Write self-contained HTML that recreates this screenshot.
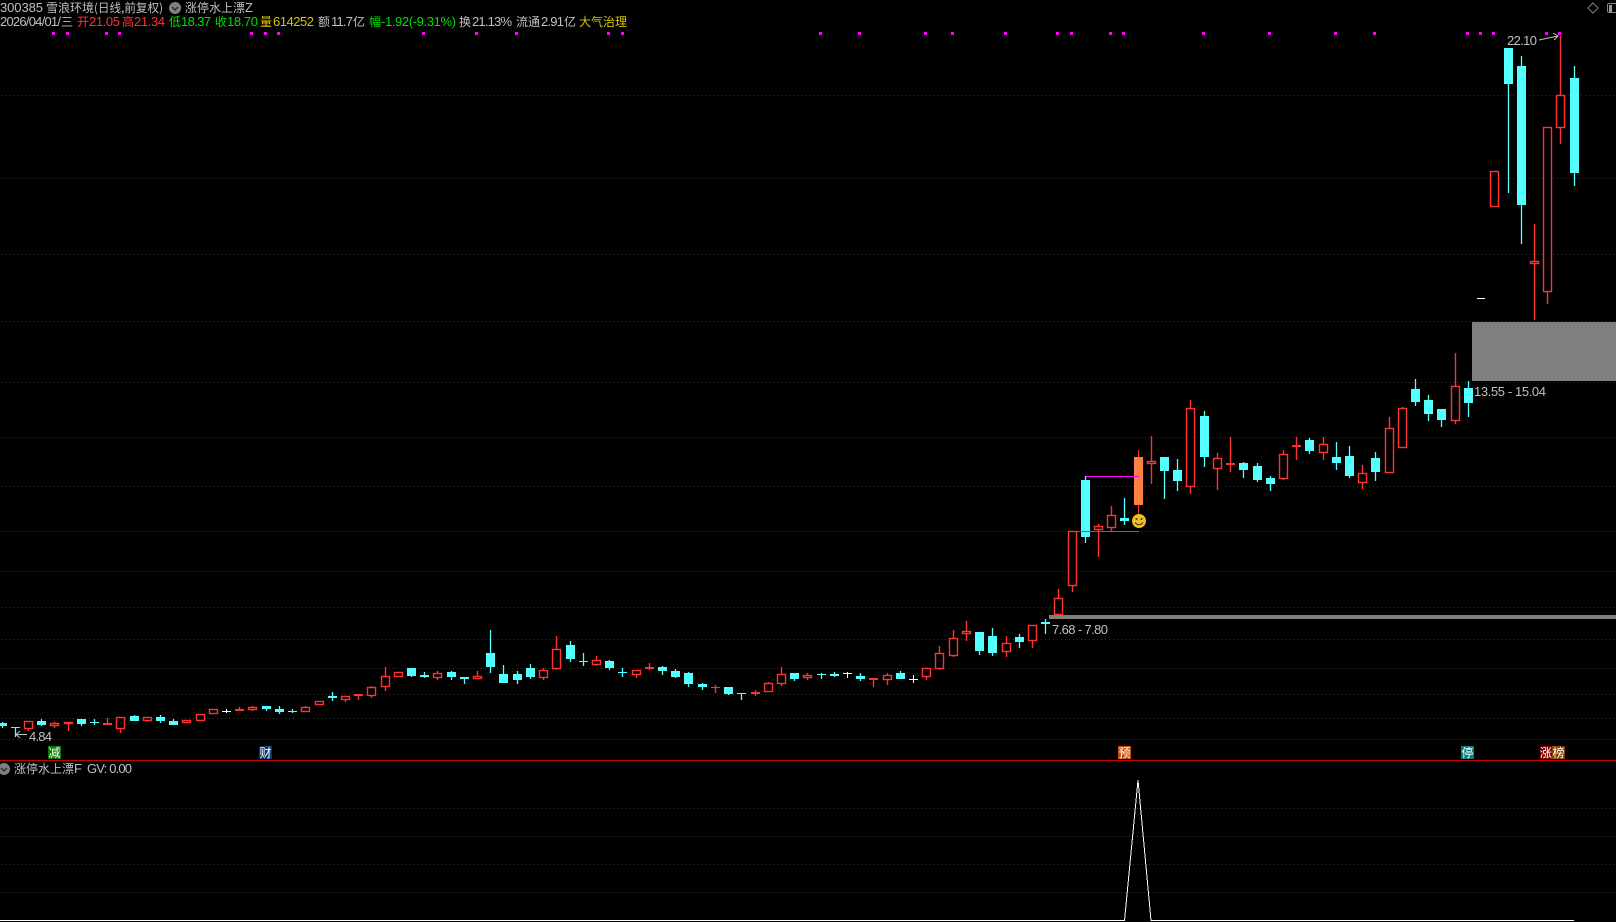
<!DOCTYPE html>
<html><head><meta charset="utf-8"><style>
html,body{margin:0;padding:0;background:#000;width:1616px;height:922px;overflow:hidden}
svg{display:block}
text{font-family:"Liberation Sans","WenQuanYi Zen Hei","Noto Sans CJK SC",sans-serif;font-size:13px;fill:#c0c0c0}
.c{font-size:12px;font-family:"WenQuanYi Zen Hei","Noto Sans CJK SC",sans-serif}
.r{fill:#ff3232}.g{fill:#00e000}.y{fill:#d8c400}.w{fill:#fff;text-anchor:middle}
</style></head><body>
<svg width="1616" height="922" viewBox="0 0 1616 922" xmlns="http://www.w3.org/2000/svg">
<rect width="1616" height="922" fill="#000"/>
<g shape-rendering="crispEdges">
<path fill="#808080" d="M1472 322H1616V381H1472zM1049 615H1616V619H1049z"/>
<path stroke="#a80000" stroke-dasharray="1 3" fill="none" d="M1 95.5H1616M1 178.5H1616M1 254.5H1616M1 321.5H1616M1 382.5H1616M1 437.5H1616M1 486.5H1616M1 531.5H1616M1 571.5H1616M1 607.5H1616M1 639.5H1616M1 668.5H1616M1 694.5H1616M1 718.5H1616M1 739.5H1616M1 808.5H1616M1 836.5H1616M1 864.5H1616M1 892.5H1616"/>
<path stroke="#c80000" d="M0 760.5H1616"/>
<path fill="#ff00ff" d="M52 32h3v3h-3zM66 32h3v3h-3zM105 32h3v3h-3zM118 32h3v3h-3zM250 32h3v3h-3zM264 32h3v3h-3zM277 32h3v3h-3zM422 32h3v3h-3zM475 32h3v3h-3zM515 32h3v3h-3zM607 32h3v3h-3zM621 32h3v3h-3zM819 32h3v3h-3zM858 32h3v3h-3zM924 32h3v3h-3zM951 32h3v3h-3zM1004 32h3v3h-3zM1056 32h3v3h-3zM1070 32h3v3h-3zM1109 32h3v3h-3zM1122 32h3v3h-3zM1202 32h3v3h-3zM1268 32h3v3h-3zM1334 32h3v3h-3zM1373 32h3v3h-3zM1466 32h3v3h-3zM1479 32h3v3h-3zM1492 32h3v3h-3zM1545 32h3v3h-3zM1558 32h3v3h-3z"/>
<!-- cyan wicks -->
<path shape-rendering="auto" stroke-width="1.3" stroke="#54ffff" fill="none" d="M2.5 722V728M15.5 727V737M41.5 719V726M81.5 719V726M94.5 719V725M134.5 715V721M160.5 715V723M173.5 719V725M266.5 706V711M279.5 706V714M292.5 709V713M332.5 692V701M411.5 668V677M424.5 672V678M451.5 671V680M464.5 677V684M490.5 630V673M503.5 665V683M517.5 671V684M530.5 664V679M570.5 641V662M583.5 653V666M609.5 660V670M622.5 668V677M662.5 666V675M675.5 669V678M688.5 672V687M702.5 683V690M728.5 687V695M741.5 693V700M794.5 673V681M821.5 673V679M834.5 672V677M860.5 673V681M900.5 671V679M979.5 632V655M992.5 628V656M1019.5 634V648M1045.5 619V634M1085.5 476V543M1124.5 498V525M1164.5 457V499M1177.5 459V491M1204.5 411V467M1243.5 462V478M1257.5 463V482M1270.5 476V491M1309.5 438V454M1336.5 442V470M1349.5 446V478M1375.5 452V481M1415.5 379V406M1428.5 395V421M1441.5 409V427M1468.5 381V417M1508.5 48V193M1521.5 56V244M1574.5 66V186"/>
<!-- cyan bodies -->
<path fill="#54ffff" d="M-2 723h9V726h-9zM11 727h9v1h-9zM37 721h9V725h-9zM77 719h9V724h-9zM90 722h9v1h-9zM130 716h9V721h-9zM156 717h9V721h-9zM169 721h9V725h-9zM262 706h9V709h-9zM275 709h9V712h-9zM288 711h9v1h-9zM328 696h9V698h-9zM407 668h9V676h-9zM420 675h9V677h-9zM447 672h9V677h-9zM460 677h9V679h-9zM486 653h9V667h-9zM499 674h9V683h-9zM513 674h9V680h-9zM526 668h9V677h-9zM566 645h9V659h-9zM579 661h9v1h-9zM605 661h9V668h-9zM618 672h9v1h-9zM658 667h9V671h-9zM671 671h9V677h-9zM684 673h9V684h-9zM698 684h9V687h-9zM724 687h9V694h-9zM737 693h9v1h-9zM790 673h9V679h-9zM817 674h9v1h-9zM830 674h9V676h-9zM856 676h9V679h-9zM896 673h9V679h-9zM975 632h9V651h-9zM988 636h9V653h-9zM1015 637h9V642h-9zM1041 622h9V624h-9zM1081 480h9V537h-9zM1120 518h9V521h-9zM1160 457h9V471h-9zM1173 470h9V481h-9zM1200 416h9V457h-9zM1239 463h9V470h-9zM1253 466h9V480h-9zM1266 478h9V484h-9zM1305 440h9V451h-9zM1332 457h9V463h-9zM1345 456h9V476h-9zM1371 458h9V472h-9zM1411 389h9V402h-9zM1424 400h9V414h-9zM1437 409h9V420h-9zM1464 388h9V403h-9zM1504 48h9V84h-9zM1517 66h9V205h-9zM1570 78h9V173h-9z"/>
<!-- red wicks -->
<path shape-rendering="auto" stroke-width="1.4" stroke="#ff3232" fill="none" d="M28.5 721V731M54.5 722V728M68.5 722V731M107.5 718V725M120.5 717V733M147.5 717V722M239.5 707V710M252.5 706V711M305.5 706V712M345.5 696V702M358.5 694V700M371.5 686V698M385.5 667V691M437.5 671V680M477.5 671V679M543.5 668V680M556.5 636V670M596.5 656V666M636.5 670V678M649.5 663V670M715.5 685V693M755.5 690V696M768.5 682V692M781.5 667V686M807.5 673V680M873.5 678V687M887.5 673V685M926.5 668V680M939.5 646V670M953.5 630V657M966.5 621V641M1006.5 636V657M1032.5 625V648M1058.5 589V615M1072.5 531V592M1098.5 524V557M1111.5 506V531M1151.5 436V484M1190.5 400V494M1217.5 453V490M1230.5 437V472M1283.5 450V480M1296.5 437V460M1323.5 437V460M1362.5 465V489M1389.5 417V473M1402.5 407V448M1455.5 353V424M1534.5 224V320M1547.5 127V304M1560.5 36V144"/>
<!-- red flats -->
<path fill="#ff3232" d="M103 723h9V725h-9zM235 709h9V711h-9zM354 694h9V696h-9zM645 667h9V669h-9zM711 687h9v1h-9zM751 692h9V694h-9zM869 678h9V680h-9zM1226 463h9V465h-9zM1292 445h9V447h-9z"/>
<!-- red hollow -->
<g fill="#000" stroke="#ff3232" stroke-width="1.4" shape-rendering="auto">
<rect x="24.5" y="721.5" width="8" height="7"/><rect x="50.5" y="723.5" width="8" height="2"/><rect x="64.5" y="722.5" width="8" height="1"/><rect x="116.5" y="717.5" width="8" height="11"/><rect x="143.5" y="717.5" width="8" height="3"/><rect x="182.5" y="720.5" width="8" height="2"/><rect x="196.5" y="714.5" width="8" height="6"/><rect x="209.5" y="709.5" width="8" height="4"/><rect x="248.5" y="707.5" width="8" height="2"/><rect x="301.5" y="707.5" width="8" height="4"/><rect x="315.5" y="701.5" width="8" height="3"/><rect x="341.5" y="696.5" width="8" height="3"/><rect x="367.5" y="687.5" width="8" height="8"/><rect x="381.5" y="676.5" width="8" height="10"/><rect x="394.5" y="672.5" width="8" height="4"/><rect x="433.5" y="673.5" width="8" height="4"/><rect x="473.5" y="676.5" width="8" height="2"/><rect x="539.5" y="670.5" width="8" height="7"/><rect x="552.5" y="649.5" width="8" height="19"/><rect x="592.5" y="660.5" width="8" height="4"/><rect x="632.5" y="670.5" width="8" height="4"/><rect x="764.5" y="683.5" width="8" height="8"/><rect x="777.5" y="674.5" width="8" height="9"/><rect x="803.5" y="675.5" width="8" height="2"/><rect x="883.5" y="675.5" width="8" height="4"/><rect x="922.5" y="668.5" width="8" height="8"/><rect x="935.5" y="653.5" width="8" height="15"/><rect x="949.5" y="638.5" width="8" height="17"/><rect x="962.5" y="631.5" width="8" height="2"/><rect x="1002.5" y="643.5" width="8" height="8"/><rect x="1028.5" y="625.5" width="8" height="15"/><rect x="1054.5" y="598.5" width="8" height="16"/><rect x="1068.5" y="531.5" width="8" height="54"/><rect x="1094.5" y="526.5" width="8" height="3"/><rect x="1107.5" y="515.5" width="8" height="12"/><rect x="1147.5" y="461.5" width="8" height="2"/><rect x="1186.5" y="408.5" width="8" height="78"/><rect x="1213.5" y="458.5" width="8" height="10"/><rect x="1279.5" y="454.5" width="8" height="24"/><rect x="1319.5" y="444.5" width="8" height="8"/><rect x="1358.5" y="473.5" width="8" height="9"/><rect x="1385.5" y="428.5" width="8" height="44"/><rect x="1398.5" y="408.5" width="8" height="39"/><rect x="1451.5" y="386.5" width="8" height="34"/><rect x="1490.5" y="171.5" width="8" height="35"/><rect x="1530.5" y="261.5" width="8" height="2"/><rect x="1543.5" y="127.5" width="8" height="164"/><rect x="1556.5" y="95.5" width="8" height="32"/>
</g>
<!-- white doji -->
<path stroke="#fff" fill="none" d="M226.5 709V713M222 711.5H231M847.5 672V678M843 673.5H852M913.5 675V683M909 679.5H918M1477 298.5H1485"/>
<!-- orange -->
<path stroke="#ff3232" d="M1138.5 450V514"/>
<rect x="1134" y="457" width="9" height="48" fill="#ff7f3f"/>
<!-- magenta lines -->
<path stroke="#ff00ff" fill="none" d="M1086 476.5H1139M1068 531.5H1139"/>
</g>
<!-- smiley -->
<circle cx="1139" cy="521" r="7" fill="#f0c020"/>
<circle cx="1136.5" cy="519" r="1" fill="#333"/><circle cx="1141.5" cy="519" r="1" fill="#333"/>
<path d="M1135 522.5Q1139 527 1143 522.5" stroke="#333" stroke-width="1" fill="none"/>
<!-- peak -->
<g shape-rendering="crispEdges"><polyline points="0,920.5 1124.5,920.5 1138,780 1151,920.5 1574,920.5" fill="none" stroke="#fff"/></g>
<!-- arrows -->
<path d="M27 734.5H16M20 731L16 734.5L20 738" stroke="#c0c0c0" fill="none"/>
<path d="M1539 40L1558 36M1553 33L1558 36L1554 40" stroke="#c0c0c0" fill="none"/>
<!-- header -->
<text x="0" y="12" textLength="43">300385</text>
<text class="c" x="46" y="12">雪浪环境</text>
<text x="94" y="12" textLength="69" lengthAdjust="spacingAndGlyphs" class="c">(日线,前复权)</text>
<circle cx="175" cy="8" r="6" fill="#808080"/><path d="M172 7L175 10L178 7" stroke="#2a2a2a" stroke-width="1.4" fill="none"/>
<text class="c" x="185" y="12">涨停水上漂</text><text x="245" y="12">Z</text>
<text x="0" y="26" textLength="61">2026/04/01/</text><text class="c" x="61" y="26">三</text>
<text class="c r" x="77" y="26">开</text><text class="r" x="89" y="26" textLength="31">21.05</text>
<text class="c r" x="122" y="26">高</text><text class="r" x="134" y="26" textLength="31">21.34</text>
<text class="c g" x="169" y="26">低</text><text class="g" x="181" y="26" textLength="30">18.37</text>
<text class="c g" x="215" y="26">收</text><text class="g" x="227" y="26" textLength="31">18.70</text>
<text class="c y" x="260" y="26">量</text><text class="y" x="273" y="26" textLength="41">614252</text>
<text class="c" x="318" y="26">额</text><text x="331" y="26" textLength="22">11.7</text><text class="c" x="353" y="26">亿</text>
<text class="c g" x="369" y="26">幅</text><text class="g" x="381" y="26" textLength="75">-1.92(-9.31%)</text>
<text class="c" x="459" y="26">换</text><text x="472" y="26" textLength="40">21.13%</text>
<text class="c" x="516" y="26">流通</text><text x="541" y="26" textLength="23">2.91</text><text class="c" x="564" y="26">亿</text>
<text class="c y" x="579" y="26">大气治理</text>
<!-- top right icons -->
<path d="M1593 3L1598 8L1593 13L1588 8Z" stroke="#808080" fill="none"/>
<rect x="1607.5" y="3.5" width="12" height="9" rx="1.5" stroke="#808080" fill="none"/><rect x="1609" y="5" width="3" height="7" fill="#9a9a9a"/>
<!-- price labels -->
<text x="29" y="741" textLength="23">4.84</text>
<text x="1052" y="634" textLength="56">7.68 - 7.80</text>
<text x="1474" y="396" textLength="72">13.55 - 15.04</text>
<text x="1507" y="45" textLength="30">22.10</text>
<!-- badges -->
<rect x="48" y="746" width="13" height="13" fill="#0a7a0a"/><text class="c w" x="54.5" y="757">减</text>
<rect x="259" y="746" width="13" height="13" fill="#0a3a6a"/><text class="c w" x="265.5" y="757">财</text>
<rect x="1118" y="746" width="13" height="13" fill="#c05010"/><text class="c w" x="1124.5" y="757">预</text>
<rect x="1461" y="746" width="13" height="13" fill="#008080"/><text class="c w" x="1467.5" y="757">停</text>
<rect x="1540" y="746" width="12" height="13" fill="#800000"/><text class="c w" x="1546" y="757">涨</text>
<rect x="1552" y="746" width="13" height="13" fill="#8a4000"/><text class="c w" x="1558.5" y="757">榜</text>
<!-- lower title -->
<circle cx="4" cy="769" r="6" fill="#808080"/><path d="M1 768L4 771L7 768" stroke="#2a2a2a" stroke-width="1.4" fill="none"/>
<text class="c" x="14" y="773">涨停水上漂</text><text x="74" y="773">F</text>
<text x="87" y="773" textLength="45">GV: 0.00</text>
</svg>
</body></html>
